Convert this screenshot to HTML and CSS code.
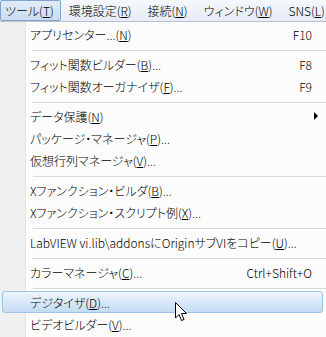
FILE: index.html
```html
<!DOCTYPE html>
<html lang="ja">
<head>
  <meta charset="UTF-8">
  <title>ツール メニュー</title>
  <link rel="stylesheet" href="styles.css">
</head>
<body>

<div class="menubar">
  <div class="bar-item active">ツール(<u>T</u>)</div>
  <div class="bar-item">環境設定(<u>R</u>)</div>
  <div class="bar-item">接続(<u>N</u>)</div>
  <div class="bar-item">ウィンドウ(<u>W</u>)</div>
  <div class="bar-item">SNS(<u>L</u>)</div>
</div>

<div class="menu">
  <div class="item"><span>アプリセンター...(<u>N</u>)</span><span class="key">F10</span></div>
  <div class="sep"></div>
  <div class="item"><span>フィット関数ビルダー(<u>B</u>)...</span><span class="key">F8</span></div>
  <div class="item"><span>フィット関数オーガナイザ(<u>F</u>)...</span><span class="key">F9</span></div>
  <div class="sep"></div>
  <div class="item"><span>データ保護(<u>N</u>)</span><span class="arrow"></span></div>
  <div class="item"><span>パッケージ・マネージャ(<u>P</u>)...</span></div>
  <div class="item"><span>仮想行列マネージャ(<u>V</u>)...</span></div>
  <div class="sep"></div>
  <div class="item"><span>Xファンクション・ビルダ(<u>B</u>)...</span></div>
  <div class="item"><span>Xファンクション・スクリプト例(<u>X</u>)...</span></div>
  <div class="sep"></div>
  <div class="item"><span>LabVIEW vi.lib\addonsにOriginサブVIをコピー(<u>U</u>)...</span></div>
  <div class="sep"></div>
  <div class="item"><span>カラーマネージャ(<u>C</u>)...</span><span class="key">Ctrl+Shift+O</span></div>
  <div class="sep"></div>
  <div class="item hover"><span>デジタイザ(<u>D</u>)...</span>
    <svg class="cursor" width="13" height="20" viewBox="0 0 13 20">
      <path d="M0.5 0.5 L0.5 16 L4 12.5 L6.5 18.5 L9 17.5 L6.5 11.5 L11.5 11.5 Z" fill="#fff" stroke="#000" stroke-width="1"/>
    </svg>
  </div>
  <div class="item"><span>ビデオビルダー(<u>V</u>)...</span></div>
</div>

</body>
</html>
```

FILE: styles.css
```css
body {
  margin: 0;
  width: 326px;
  height: 337px;
  overflow: hidden;
  font-family: "Noto Sans CJK JP", "Noto Sans", sans-serif;
  font-size: 12px;
  font-weight: 300;
  font-feature-settings: "palt";
  color: #000;
  background: #fcfcfc;
}

u {
  text-decoration: underline;
  text-underline-offset: 1px;
}

.menubar {
  display: flex;
  height: 21px;
  background: linear-gradient(#f5f8fc, #e6ecf5);
  border-bottom: 1px solid #b9c1cc;
}

.bar-item {
  display: flex;
  align-items: center;
  padding: 0 8px;
  white-space: nowrap;
}

.bar-item.active {
  padding: 0 6px 0 4px;
  background: linear-gradient(#e2ecf8, #c9dbf1);
  border: 1px solid #7fa4cf;
  border-radius: 2px;
}

.menu {
  height: 315px;
  padding-top: 1px;
  background: linear-gradient(to right, #f0f0f0 0 25px, #e2e3e3 25px 26px, #ffffff 26px 27px, #fcfcfc 27px);
}

.item {
  position: relative;
  display: flex;
  justify-content: space-between;
  align-items: center;
  height: 22px;
  margin: 0 2px;
  padding: 0 12px 0 28px;
  white-space: nowrap;
}

.arrow {
  width: 0;
  height: 0;
  margin-right: -6px;
  border-top: 4px solid transparent;
  border-bottom: 4px solid transparent;
  border-left: 4px solid #000;
}

.item.hover {
  height: 20px;
  margin-right: 3px;
  border: 1px solid #9cc2e6;
  border-radius: 3px;
  padding-left: 27px;
  background: linear-gradient(#eef5fd, #c3dcf4);
}

.cursor {
  position: absolute;
  left: 172px;
  top: 10px;
}

.sep {
  height: 1px;
  margin: 5px 0 1px 33px;
  background: #d7d7d7;
  border-bottom: 1px solid #ffffff;
}
```
